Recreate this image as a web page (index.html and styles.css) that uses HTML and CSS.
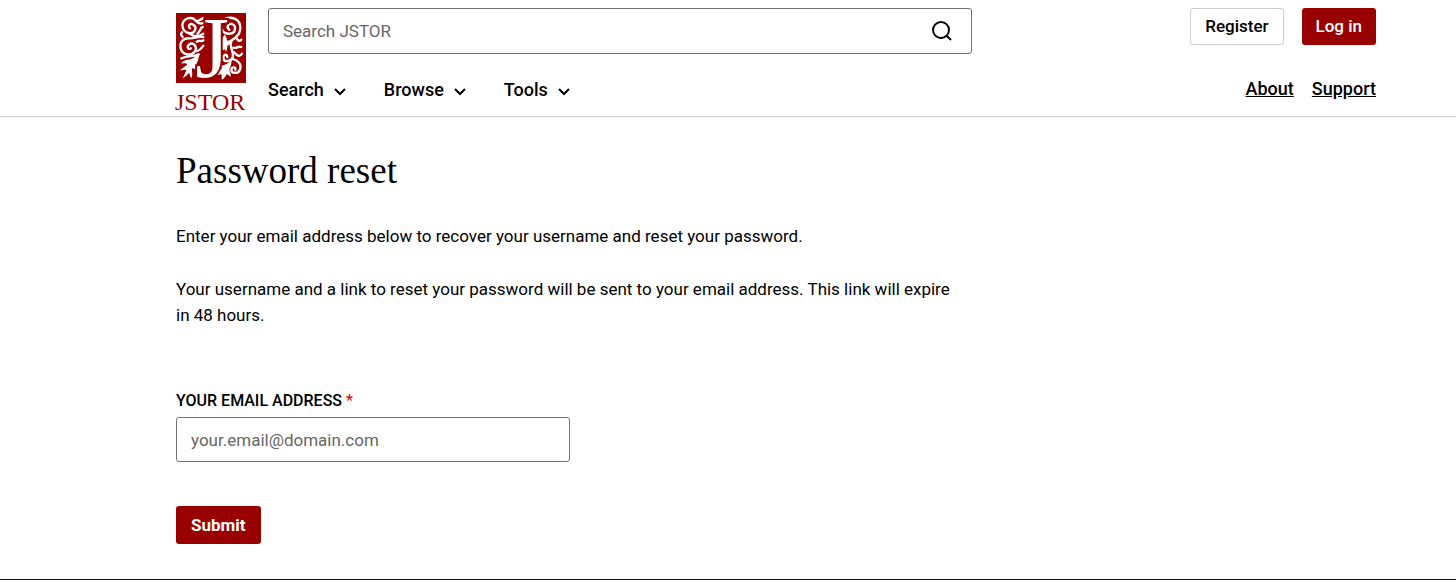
FILE: index.html
```html
<!DOCTYPE html>
<html lang="en">
<head>
    <meta charset="UTF-8">
    <meta name="viewport" content="width=device-width, initial-scale=1.0">
    <link rel="stylesheet" href="styles.css">
    <title>Password reset</title>
</head>
<body>

    <header class="header">
        <a class="logo" href="#">
            <svg class="logo-mark" viewBox="0 0 210 210" aria-hidden="true">
                <rect width="210" height="210" fill="#990000"/>
                <g fill="none" stroke="#fff" stroke-width="7" stroke-linecap="round" stroke-linejoin="round">
                    <!-- left vine -->
                    <path d="M42 46 C34 40 42 29 52 35 C65 44 56 64 38 60 C18 56 13 32 28 20 C38 12 52 14 58 22"/>
                    <path d="M58 22 C66 28 72 20 80 16 M62 26 C68 34 76 32 82 30 M64 62 C74 56 72 44 80 42 M40 62 C54 72 68 72 82 62"/>
                    <path d="M82 72 C66 68 52 78 42 76 C22 74 10 88 14 106 C18 126 44 130 56 116 C66 102 52 86 40 94 C30 102 38 112 44 106"/>
                    <path d="M20 72 C14 66 14 62 18 58 M62 86 C72 80 76 88 82 82 M58 114 C70 116 76 106 82 98"/>
                    <path d="M16 136 C36 126 54 132 68 124 M66 128 C54 146 40 152 32 168"/>
                    <!-- right vine -->
                    <path d="M160 50 C150 44 156 30 168 33 C182 38 180 60 162 62 C140 64 128 42 140 24 C154 8 186 12 192 36 C196 60 184 72 164 84"/>
                    <path d="M164 84 C152 90 146 84 144 74 M160 90 C150 98 146 98 142 108 M180 72 C184 84 192 86 196 80"/>
                    <path d="M166 86 C158 104 176 116 170 134 C162 148 142 148 142 134 C142 124 152 122 154 132"/>
                    <path d="M172 104 C184 108 184 98 196 102 M174 118 C184 130 192 132 198 122 M170 138 C184 142 198 152 192 170 C186 184 166 182 166 170 C168 160 180 162 178 170"/>
                    <path d="M164 144 C160 156 148 164 132 174"/>
                </g>
                <g fill="#fff">
                    <!-- leaves -->
                    <path d="M70 126 C56 128 50 142 34 140 C28 140 22 144 14 152 C24 150 30 150 34 154 C28 160 22 164 12 172 C22 172 28 168 32 170 C28 178 26 184 20 196 C30 190 36 182 40 180 C42 186 42 190 46 196 C52 184 46 174 48 166 C54 166 58 170 68 172 C64 162 60 158 62 150 C68 144 66 134 70 126 Z"/>
                    <path d="M166 146 C154 150 146 158 134 158 C136 162 140 164 140 168 C132 174 126 178 114 184 C124 188 130 184 136 184 C138 190 136 194 138 200 C146 196 148 190 152 184 C158 186 160 188 164 192 C166 182 160 176 160 168 C164 162 166 154 166 146 Z"/>
                    <path d="M146 64 C142 76 134 78 130 88 C136 88 138 90 138 96 C134 104 130 108 126 116 C136 114 140 108 144 104 C148 108 148 112 150 116 C156 106 152 98 156 90 C152 82 152 72 146 64 Z"/>
                </g>
                <text class="logo-initial" x="58" y="191">J</text>
            </svg>
            <span class="logo-name">JSTOR</span>
        </a>

        <div class="header-main">
            <form class="search" role="search">
                <input class="search-input" type="text" placeholder="Search JSTOR" aria-label="Search JSTOR">
                <button class="search-button" type="button" aria-label="Submit search">
                    <svg viewBox="0 0 24 24">
                        <path fill="none" stroke="currentColor" stroke-width="2" d="M20 11 A8 8 0 1 1 4 11 A8 8 0 1 1 20 11 M17 16 L22 21"/>
                    </svg>
                </button>
            </form>
            <nav class="nav">
                <button class="nav-item">Search
                    <svg viewBox="0 0 12 8"><path fill="none" stroke="currentColor" stroke-width="2" d="M1 1 L6 6 L11 1"/></svg>
                </button>
                <button class="nav-item">Browse
                    <svg viewBox="0 0 12 8"><path fill="none" stroke="currentColor" stroke-width="2" d="M1 1 L6 6 L11 1"/></svg>
                </button>
                <button class="nav-item">Tools
                    <svg viewBox="0 0 12 8"><path fill="none" stroke="currentColor" stroke-width="2" d="M1 1 L6 6 L11 1"/></svg>
                </button>
            </nav>
        </div>

        <div class="header-side">
            <div class="account">
                <button class="button button-outline">Register</button>
                <button class="button">Log in</button>
            </div>
            <div class="links">
                <a href="#">About</a>
                <a href="#">Support</a>
            </div>
        </div>
    </header>

    <main class="content">
        <h1>Password reset</h1>
        <p>Enter your email address below to recover your username and reset your password.</p>
        <p>Your username and a link to reset your password will be sent to your email address. This link will expire in 48 hours.</p>

        <form class="reset-form">
            <label for="email">YOUR EMAIL ADDRESS <span class="required">*</span></label>
            <input id="email" class="email-input" type="email" placeholder="your.email@domain.com" required>
            <button class="button button-submit" type="submit">Submit</button>
        </form>
    </main>

    <footer class="footer"></footer>

</body>
</html>
```
FILE: styles.css
```css
* {
    margin: 0;
    padding: 0;
    box-sizing: border-box;
}

body {
    font-family: Roboto, "Liberation Sans", sans-serif;
    font-size: 17px;
    line-height: 26px;
    color: #000;
    background-color: #fff;
}

button, input {
    font: inherit;
    color: inherit;
}
button {
    cursor: pointer;
}
a {
    color: inherit;
}

.header {
    display: flex;
    padding: 8px 80px 0 175px;
    border-bottom: 1px solid #ccc;
}

.logo {
    width: 71px;
    margin-right: 22px;
    padding-top: 5px;
    text-decoration: none;
}
.logo-mark {
    display: block;
    width: 70px;
    height: 70px;
    margin-left: 1px;
    overflow: visible;
}
.logo-initial {
    font-family: "Liberation Serif", serif;
    font-size: 260px;
    fill: #fff;
    stroke: #990000;
    stroke-width: 12px;
    paint-order: stroke;
}
.logo-name {
    display: block;
    padding-top: 5px;
    font-family: "Liberation Serif", serif;
    font-size: 24px;
    line-height: 28px;
    color: #990000;
}

.header-main {
    flex: 0 1 704px;
}
.search {
    display: flex;
    height: 46px;
    border: 1px solid #727272;
    border-radius: 3px;
}
.search-input {
    flex: 1;
    min-width: 0;
    padding: 0 14px;
    border: none;
    background: none;
}
.search-button {
    display: flex;
    align-items: center;
    justify-content: center;
    width: 60px;
    border: none;
    background: none;
}
.search-button svg {
    width: 24px;
    height: 24px;
}
::placeholder {
    color: #666;
    opacity: 1;
}

.nav {
    display: flex;
    gap: 38px;
    margin-top: 23px;
}
.nav-item {
    display: flex;
    align-items: center;
    gap: 10px;
    border: none;
    background: none;
    font-size: 18px;
    font-weight: 500;
}
.nav-item svg {
    width: 12px;
    height: 8px;
    margin-top: 4px;
}

.header-side {
    display: flex;
    flex-direction: column;
    align-items: flex-end;
    gap: 31px;
    margin-left: auto;
}
.account, .links {
    display: flex;
    gap: 18px;
}
.links {
    font-size: 18px;
    font-weight: 500;
}

.button {
    height: 37px;
    padding: 0 14px 2px;
    border: none;
    border-radius: 3px;
    font-weight: 500;
    color: #fff;
    background-color: #990000;
}
.button-outline {
    border: 1px solid #ccc;
    color: #000;
    background-color: #fff;
}

.content {
    max-width: 966px;
    padding: 31px 0 35px 176px;
}
.content h1 {
    margin-bottom: 29px;
    font-family: "Liberation Serif", serif;
    font-size: 37px;
    font-weight: 400;
    line-height: 46px;
}
.content p {
    margin-bottom: 27px;
}

.reset-form {
    display: flex;
    flex-direction: column;
    align-items: flex-start;
    margin-top: 60px;
}
.reset-form label {
    margin-bottom: 3px;
    font-size: 16px;
    font-weight: 500;
}
.required {
    font-weight: 400;
    color: #e00000;
}
.email-input {
    width: 394px;
    height: 45px;
    padding: 0 14px;
    border: 1px solid #727272;
    border-radius: 3px;
}
.button-submit {
    height: 38px;
    margin-top: 44px;
    padding: 0 15px;
    font-weight: 700;
}

.footer {
    border-top: 1px solid #111;
}
```
